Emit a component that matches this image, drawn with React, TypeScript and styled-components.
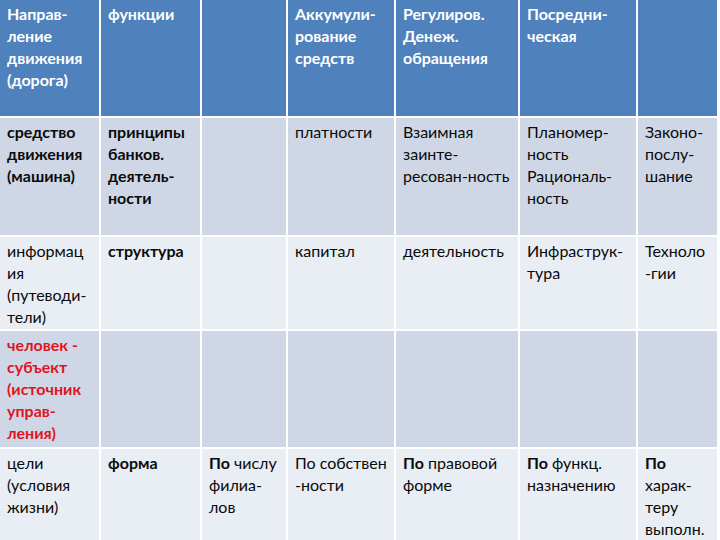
import React from "react";
import styled, { createGlobalStyle } from "styled-components";

const Global = createGlobalStyle`
  html, body { margin: 0; padding: 0; background: #ffffff; }
  body { font-family: Lato, "Open Sans", "Noto Sans", sans-serif; }
`;

const Table = styled.div`
  display: grid;
  grid-template-columns: 99px 99px 84px 106px 122px 116px 79px;
  grid-template-rows: 116px 117px 92px 116px 91px;
  column-gap: 2px;
  row-gap: 2px;
  width: 720px;
  height: 540px;
  overflow: hidden;
  background: #ffffff;
`;

type Tone = "head" | "dark" | "light";

const Cell = styled.div<{ $tone: Tone }>`
  box-sizing: border-box;
  padding: 3px 2px 0 7px;
  font-size: 16px;
  line-height: 22px;
  white-space: nowrap;
  overflow: hidden;
  background: ${(p) =>
    p.$tone === "head" ? "#4f81bd" : p.$tone === "dark" ? "#cfd7e6" : "#e9edf4"};
  color: ${(p) => (p.$tone === "head" ? "#ffffff" : "#0a0a0a")};
  font-weight: ${(p) => (p.$tone === "head" ? 700 : 400)};
`;

const B = styled.span`
  font-weight: 700;
`;

const Red = styled.span`
  font-weight: 700;
  color: #e0141e;
`;

const lines = (arr: string[]) =>
  arr.map((l, i) => (
    <React.Fragment key={i}>
      {l}
      {i < arr.length - 1 && <br />}
    </React.Fragment>
  ));

export default function App() {
  return (
    <>
      <Global />
      <Table>
        <Cell $tone="head">{lines(["Направ-", "ление", "движения", "(дорога)"])}</Cell>
        <Cell $tone="head">функции</Cell>
        <Cell $tone="head" />
        <Cell $tone="head">{lines(["Аккумули-", "рование", "средств"])}</Cell>
        <Cell $tone="head">{lines(["Регулиров.", "Денеж.", "обращения"])}</Cell>
        <Cell $tone="head">{lines(["Посредни-", "ческая"])}</Cell>
        <Cell $tone="head" />

        <Cell $tone="dark"><B>{lines(["средство", "движения", "(машина)"])}</B></Cell>
        <Cell $tone="dark"><B>{lines(["принципы", "банков.", "деятель-", "ности"])}</B></Cell>
        <Cell $tone="dark" />
        <Cell $tone="dark">платности</Cell>
        <Cell $tone="dark">{lines(["Взаимная", "заинте-", "ресован-ность"])}</Cell>
        <Cell $tone="dark">{lines(["Планомер-", "ность", "Рациональ-", "ность"])}</Cell>
        <Cell $tone="dark">{lines(["Законо-", "послу-", "шание"])}</Cell>

        <Cell $tone="light">{lines(["информац", "ия", "(путеводи-", "тели)"])}</Cell>
        <Cell $tone="light"><B>структура</B></Cell>
        <Cell $tone="light" />
        <Cell $tone="light">капитал</Cell>
        <Cell $tone="light">деятельность</Cell>
        <Cell $tone="light">{lines(["Инфраструк-", "тура"])}</Cell>
        <Cell $tone="light">{lines(["Техноло", "-гии"])}</Cell>

        <Cell $tone="dark"><Red>{lines(["человек -", "субъект", "(источник", "управ-", "ления)"])}</Red></Cell>
        <Cell $tone="dark" />
        <Cell $tone="dark" />
        <Cell $tone="dark" />
        <Cell $tone="dark" />
        <Cell $tone="dark" />
        <Cell $tone="dark" />

        <Cell $tone="light">{lines(["цели", "(условия", "жизни)"])}</Cell>
        <Cell $tone="light"><B>форма</B></Cell>
        <Cell $tone="light"><B>По</B> числу<br />филиа-<br />лов</Cell>
        <Cell $tone="light">{lines(["По собствен", "-ности"])}</Cell>
        <Cell $tone="light"><B>По</B> правовой<br />форме</Cell>
        <Cell $tone="light"><B>По</B> функц.<br />назначению</Cell>
        <Cell $tone="light"><B>По</B><br />харак-<br />теру<br />выполн.</Cell>
      </Table>
    </>
  );
}
